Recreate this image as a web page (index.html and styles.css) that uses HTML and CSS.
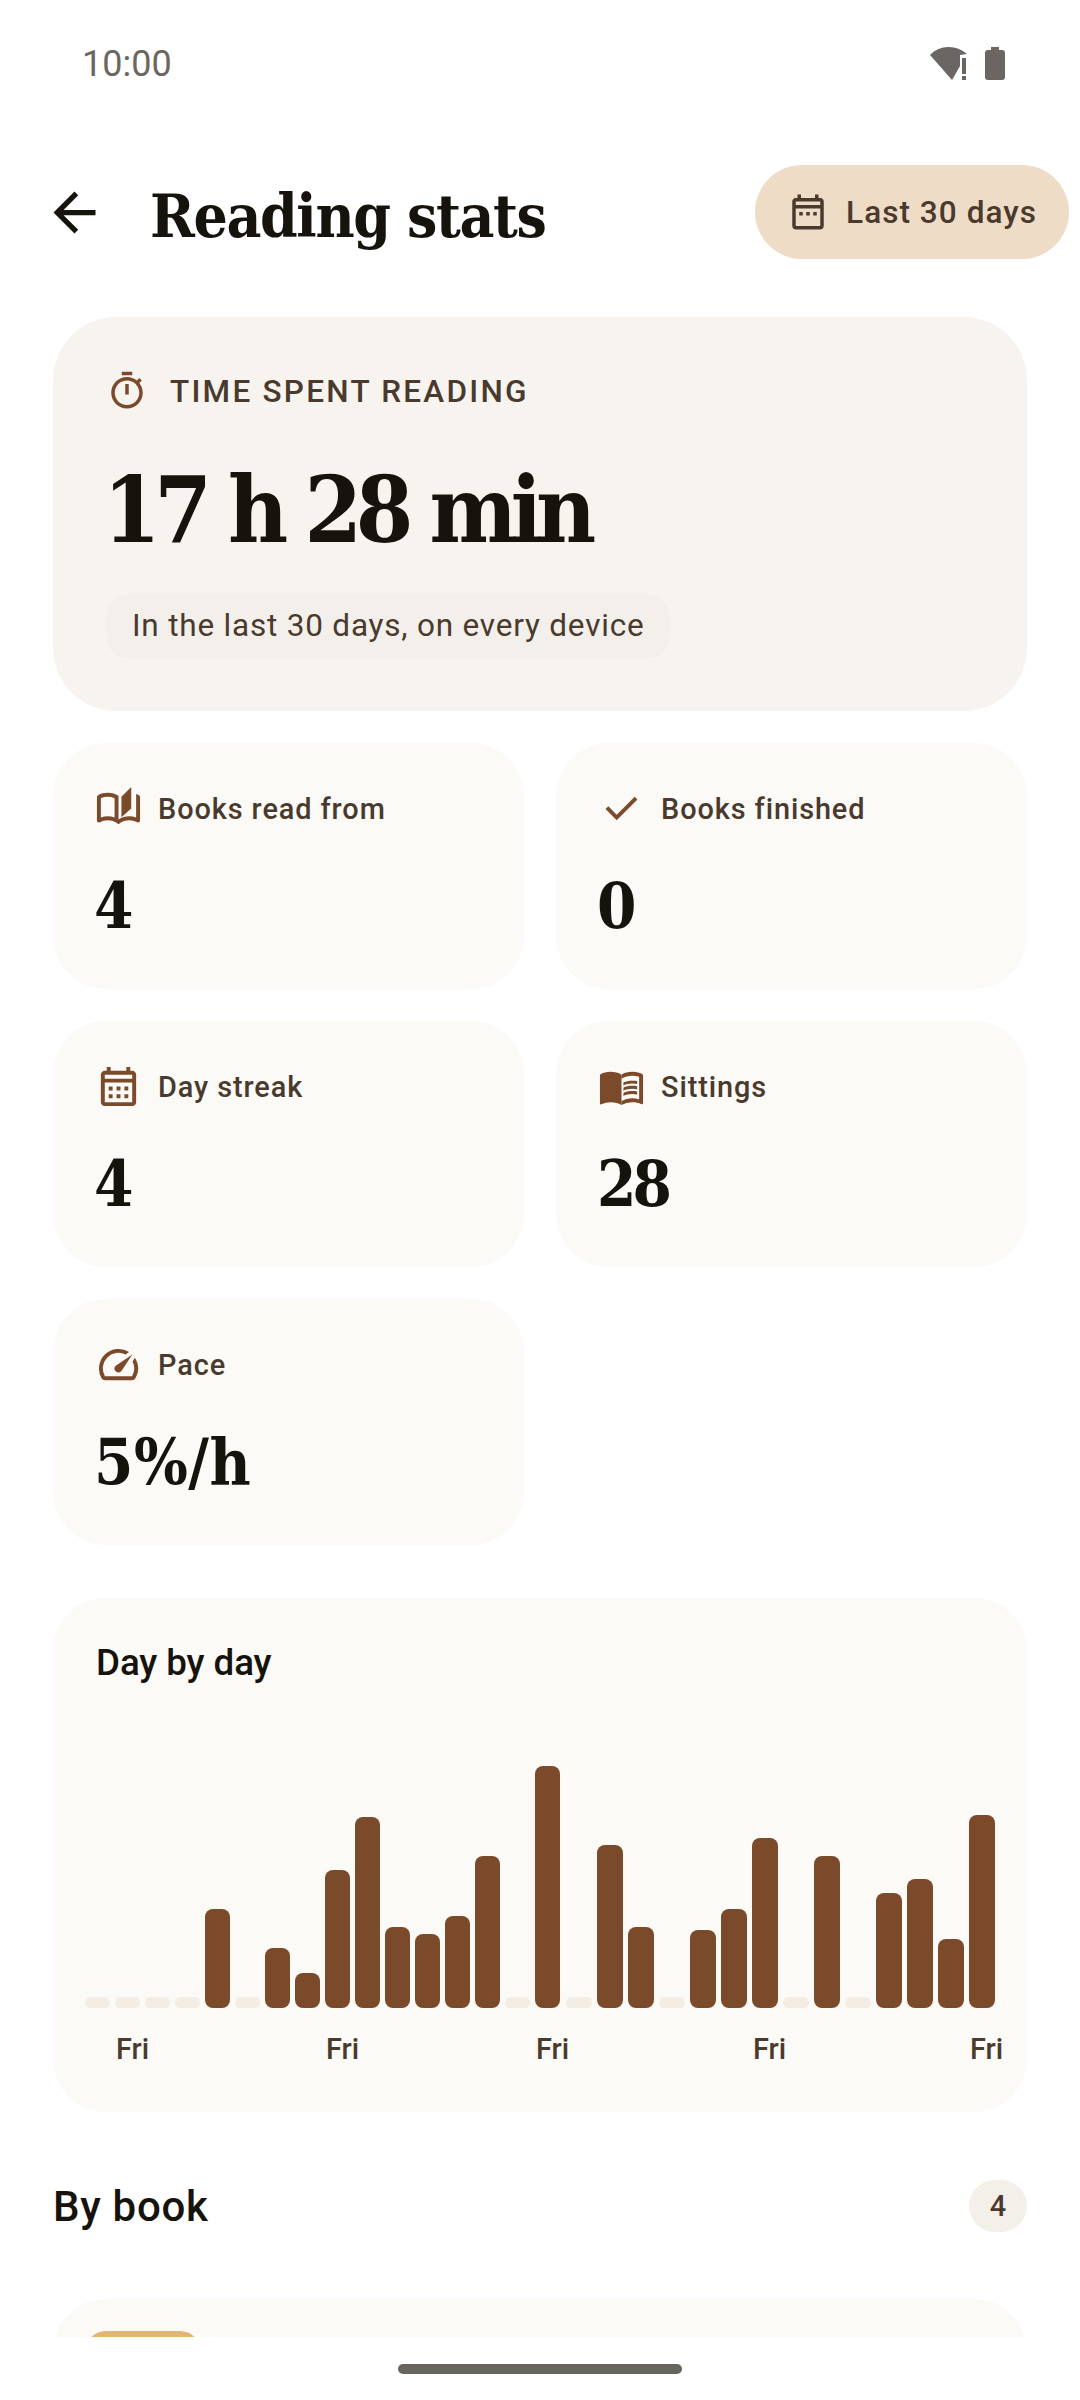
FILE: index.html
```html
<!DOCTYPE html>
<html lang="en">
<head>
    <meta charset="utf-8">
    <title>Reading stats</title>
    <link rel="stylesheet" href="styles.css">
</head>
<body>
<div class="screen">
    <div class="status">
        <span class="clock">10:00</span>
        <div class="status-icons">
            <svg class="wifi" viewBox="0 0 38 33"><path d="M0 8C10-2.500 26-2.500 37 7l-7 1v11l-8 14z"/><path d="M32 11h4v16h-4zM32 29h4v4h-4z"/></svg>
            <svg class="battery" viewBox="0 0 20 33"><path d="M6 0h8v3h3a3 3 0 0 1 3 3v24a3 3 0 0 1-3 3H3a3 3 0 0 1-3-3V6a3 3 0 0 1 3-3h3z"/></svg>
        </div>
    </div>

    <div class="content">
        <div class="topbar">
            <svg class="back" viewBox="0 0 24 24"><path d="M7.825 13l5.600 5.600L12 20l-8-8 8-8 1.425 1.400-5.600 5.600H20v2H7.825z"/></svg>
            <h1 class="title">Reading stats</h1>
            <div class="range">
                <svg class="range-icon" viewBox="0 0 24 24"><path d="M5 22c-.55 0-1.020-.2-1.410-.59C3.200 21.020 3 20.550 3 20V6c0-.55.2-1.020.59-1.410C3.980 4.200 4.450 4 5 4h1V2h2v2h8V2h2v2h1c.55 0 1.020.2 1.410.59.39.39.59.86.59 1.410v14c0 .55-.2 1.020-.59 1.410-.39.39-.86.59-1.410.59H5zm0-2h14V10H5v10zM5 8h14V6H5v2z"/><path d="M7 12h2v2H7zM11 12h2v2h-2zM15 12h2v2h-2z"/></svg>
                <span>Last 30 days</span>
            </div>
        </div>

        <div class="hero">
            <div class="hero-label">
                <svg class="hero-icon" viewBox="0 0 24 24"><path d="M9 1h6v2H9zM11 8h2v6h-2zM19.030 7.390l1.420-1.420c-.43-.51-.9-.99-1.410-1.410l-1.420 1.420C16.070 4.740 14.120 4 12 4c-4.970 0-9 4.030-9 9s4.020 9 9 9 9-4.030 9-9c0-2.120-.74-4.070-1.970-5.610zM12 20c-3.870 0-7-3.130-7-7s3.130-7 7-7 7 3.130 7 7-3.130 7-7 7z"/></svg>
                <span>TIME SPENT READING</span>
            </div>
            <div class="hero-value">17 h 28 min</div>
            <div class="hero-note">In the last 30 days, on every device</div>
        </div>

        <div class="stats">
            <div class="stat">
                <div class="stat-label">
                    <svg class="stat-icon" viewBox="0 0 24 24"><path d="M18.500 1l-5 5v10.500l5-4.500V1z"/><path d="M22.470 5.200C22 4.960 21.510 4.760 21 4.590v12.030C19.860 16.210 18.690 16 17.500 16c-1.900 0-3.780.54-5.500 1.580V5.480C10.380 4.550 8.510 4 6.500 4 4.710 4 3.020 4.440 1.530 5.200 1.200 5.360 1 5.710 1 6.080v12.080c0 .76.81 1.230 1.480.87C3.690 18.400 5.050 18 6.500 18c2.070 0 3.980.82 5.500 2 1.520-1.180 3.430-2 5.500-2 1.450 0 2.810.4 4.020 1.040.67.36 1.480-.11 1.480-.87V6.080c0-.37-.2-.72-.53-.88zM10 16.620C8.860 16.210 7.690 16 6.500 16c-1.190 0-2.360.21-3.500.62V6.710C4.110 6.240 5.280 6 6.500 6c1.200 0 2.390.25 3.500.72v9.900z"/></svg>
                    <span>Books read from</span>
                </div>
                <div class="stat-value">4</div>
            </div>
            <div class="stat">
                <div class="stat-label">
                    <svg class="stat-icon" viewBox="0 0 24 24"><path d="M9.550 18l-5.700-5.700 1.425-1.425L9.550 15.150l9.175-9.175L20.150 7.400z"/></svg>
                    <span>Books finished</span>
                </div>
                <div class="stat-value">0</div>
            </div>
            <div class="stat">
                <div class="stat-label">
                    <svg class="stat-icon" viewBox="0 0 24 24"><path d="M5 22c-.55 0-1.020-.2-1.410-.59C3.200 21.020 3 20.550 3 20V6c0-.55.2-1.020.59-1.410C3.980 4.200 4.450 4 5 4h1V2h2v2h8V2h2v2h1c.55 0 1.020.2 1.410.59.39.39.59.86.59 1.410v14c0 .55-.2 1.020-.59 1.410-.39.39-.86.59-1.410.59H5zm0-2h14V10H5v10zM5 8h14V6H5v2z"/><path d="M7 12h2v2H7zM11 12h2v2h-2zM15 12h2v2h-2zM7 16h2v2H7zM11 16h2v2h-2zM15 16h2v2h-2z"/></svg>
                    <span>Day streak</span>
                </div>
                <div class="stat-value">4</div>
            </div>
            <div class="stat">
                <div class="stat-label">
                    <svg class="stat-icon" viewBox="0 0 24 24"><path d="M12 6c-1.450-1.100-3.550-1.500-5.500-1.500S2.450 4.900 1 6v14.650c0 .25.25.5.5.5.1 0 .15-.05.25-.05C3.100 20.450 5.050 20 6.500 20c1.950 0 4.050.4 5.500 1.500z"/><path d="M21 5c-1.110-.35-2.330-.5-3.500-.5-1.950 0-4.050.4-5.500 1.500v15.500c1.350-.85 3.800-1.500 5.500-1.500 1.650 0 3.350.3 4.750 1.050.1.05.15.05.25.05.25 0 .5-.25.5-.5V6c-.6-.45-1.250-.75-2-1zm0 13.500c-1.100-.35-2.300-.5-3.500-.5-1.700 0-4.150.65-5.500 1.500V8c1.350-.85 3.800-1.500 5.500-1.500 1.200 0 2.400.15 3.500.5v11.500z"/><path d="M17.500 10.500c.88 0 1.730.09 2.500.26V9.240c-.79-.15-1.640-.24-2.500-.24-1.700 0-3.240.29-4.500.83v1.660c1.130-.64 2.700-.99 4.500-.99zM13 12.490v1.660c1.130-.64 2.700-.99 4.500-.99.88 0 1.730.09 2.500.26V11.900c-.79-.15-1.640-.24-2.500-.24-1.700 0-3.240.3-4.500.83zM17.500 14.330c-1.700 0-3.240.29-4.500.83v1.660c1.130-.64 2.700-.99 4.500-.99.88 0 1.730.09 2.500.26v-1.520c-.79-.16-1.640-.24-2.500-.24z"/></svg>
                    <span>Sittings</span>
                </div>
                <div class="stat-value tight">28</div>
            </div>
            <div class="stat">
                <div class="stat-label">
                    <svg class="stat-icon" viewBox="0 0 24 24"><path d="M20.380 8.570l-1.230 1.850a8 8 0 0 1-.22 7.580H5.070A8 8 0 0 1 15.580 6.850l1.850-1.230A10 10 0 0 0 3.350 19a2 2 0 0 0 1.720 1h13.850a2 2 0 0 0 1.740-1 10 10 0 0 0-.27-10.430z"/><path d="M10.590 15.410a2 2 0 0 0 2.830 0l5.660-8.490-8.490 5.660a2 2 0 0 0 0 2.830z"/></svg>
                    <span>Pace</span>
                </div>
                <div class="stat-value">5%/h</div>
            </div>
        </div>

        <div class="chart-card">
            <div class="chart-title">Day by day</div>
            <div class="bars">
                <div class="bar empty"></div>
                <div class="bar empty"></div>
                <div class="bar empty"></div>
                <div class="bar empty"></div>
                <div class="bar" style="height:99px"></div>
                <div class="bar empty"></div>
                <div class="bar" style="height:60px"></div>
                <div class="bar" style="height:35px"></div>
                <div class="bar" style="height:138px"></div>
                <div class="bar" style="height:191px"></div>
                <div class="bar" style="height:81px"></div>
                <div class="bar" style="height:74px"></div>
                <div class="bar" style="height:92px"></div>
                <div class="bar" style="height:152px"></div>
                <div class="bar empty"></div>
                <div class="bar" style="height:242px"></div>
                <div class="bar wide empty"></div>
                <div class="bar wide" style="height:163px"></div>
                <div class="bar wide" style="height:81px"></div>
                <div class="bar wide empty"></div>
                <div class="bar wide" style="height:78px"></div>
                <div class="bar wide" style="height:99px"></div>
                <div class="bar wide" style="height:170px"></div>
                <div class="bar wide empty"></div>
                <div class="bar wide" style="height:152px"></div>
                <div class="bar wide empty"></div>
                <div class="bar wide" style="height:115px"></div>
                <div class="bar wide" style="height:129px"></div>
                <div class="bar wide" style="height:69px"></div>
                <div class="bar wide" style="height:193px"></div>
            </div>
            <div class="days">
                <span>Fri</span>
                <span>Fri</span>
                <span>Fri</span>
                <span>Fri</span>
                <span>Fri</span>
            </div>
        </div>

        <div class="section-head">
            <h2 class="section-title">By book</h2>
            <span class="count">4</span>
        </div>

        <div class="book">
            <div class="cover"></div>
        </div>
    </div>

    <div class="navbar"><div class="handle"></div></div>
</div>
</body>
</html>
```

FILE: styles.css
```css
html, body {
    margin: 0;
    padding: 0;
    background: #fff;
}

body {
    font-family: Roboto, sans-serif;
    color: #16130c;
}

svg {
    display: block;
    flex: none;
    fill: currentColor;
}

.screen {
    width: 1080px;
    height: 2400px;
    display: flex;
    flex-direction: column;
    overflow: hidden;
}

.status {
    height: 126px;
    flex: none;
    display: flex;
    justify-content: space-between;
    align-items: flex-start;
    padding: 42px 75px 0 82px;
    box-sizing: border-box;
    color: #6b6661;
}

.clock {
    font-size: 36px;
    line-height: 44px;
}

.status-icons {
    display: flex;
    gap: 17px;
    padding-top: 5px;
}

.wifi {
    width: 38px;
    height: 33px;
}

.battery {
    width: 20px;
    height: 33px;
}

.content {
    flex: 1;
    overflow: hidden;
}

.topbar {
    display: flex;
    align-items: center;
    padding: 39px 11px 58px 43px;
}

.back {
    width: 63px;
    height: 63px;
}

.title {
    margin: 8px 0 0 44px;
    flex: 1;
    font-family: "DejaVu Serif Condensed", "DejaVu Serif", serif;
    font-weight: 700;
    font-size: 60px;
    letter-spacing: -1.400px;
}

.range {
    display: flex;
    align-items: center;
    gap: 17px;
    height: 94px;
    padding: 0 32px;
    border-radius: 47px;
    background: #eedcc6;
    color: #4a3a2e;
    font-size: 31.500px;
    font-weight: 480;
    letter-spacing: 1.050px;
}

.range-icon {
    width: 42px;
    height: 42px;
}

.hero {
    margin: 0 53px;
    height: 394px;
    box-sizing: border-box;
    padding: 53px 53px 0;
    border-radius: 63px;
    background: #f7f4ef;
}

.hero-label {
    display: flex;
    align-items: center;
    gap: 22px;
    color: #4a3a2e;
    font-size: 31.500px;
    font-weight: 500;
    letter-spacing: 2.250px;
}

.hero-icon {
    width: 42px;
    height: 42px;
    color: #7b4a2b;
}

.hero-value {
    margin: 38px 0 0 -3px;
    font-family: "DejaVu Serif Condensed", "DejaVu Serif", serif;
    font-weight: 700;
    font-size: 92px;
    letter-spacing: -6.300px;
    line-height: 120px;
}

.hero-note {
    display: inline-block;
    margin-top: 24px;
    padding: 0 26px;
    height: 64px;
    line-height: 64px;
    border-radius: 21px;
    background: #f3f0eb;
    color: #4a3a2e;
    font-size: 31.500px;
    letter-spacing: 0.800px;
}

.stats {
    display: grid;
    grid-template-columns: 1fr 1fr;
    gap: 32px;
    margin: 32px 53px 0;
}

.stat {
    height: 246px;
    box-sizing: border-box;
    padding: 42px 42px 0;
    border-radius: 53px;
    background: #fbfaf6;
}

.stat-label {
    display: flex;
    align-items: center;
    gap: 16px;
    color: #4a3a2e;
    font-size: 28.900px;
    font-weight: 480;
    letter-spacing: 0.900px;
}

.stat-icon {
    width: 47px;
    height: 47px;
    color: #7b4a2b;
}

.stat-value {
    margin: 34px 0 0 -1px;
    font-family: "DejaVu Serif Condensed", "DejaVu Serif", serif;
    font-weight: 700;
    font-size: 63px;
    line-height: 80px;
    letter-spacing: 0.500px;
}

.stat-value.tight {
    letter-spacing: -4px;
}

.chart-card {
    margin: 53px 53px 0;
    height: 514px;
    box-sizing: border-box;
    padding: 43px 32px 0;
    border-radius: 53px;
    background: #fbfaf6;
}

.chart-title {
    padding-left: 11px;
    font-size: 36.750px;
    font-weight: 500;
    line-height: 44px;
    letter-spacing: -0.100px;
}

.bars {
    display: flex;
    align-items: flex-end;
    gap: 5px;
    height: 268px;
    margin-top: 55px;
}

.bar {
    width: 25px;
    flex: none;
    border-radius: 8px;
    background: #7b4a2b;
}

.bar.wide {
    width: 26px;
}

.bar.empty {
    height: 11px;
    border-radius: 6px;
    background: #f3ede4;
}

.bar:nth-child(17) {
    margin-left: 1px;
}

.days {
    display: grid;
    grid-template-columns: 210px 210px 217px 217px auto;
    margin-top: 23px;
    padding-left: 31px;
    color: #4a3a2e;
    font-size: 28.900px;
    font-weight: 480;
    line-height: 36px;
}

.section-head {
    display: flex;
    justify-content: space-between;
    align-items: center;
    height: 52px;
    margin: 68px 53px 0;
}

.section-title {
    margin: 0;
    font-size: 42px;
    font-weight: 500;
    letter-spacing: 0.700px;
}

.count {
    width: 58px;
    height: 52px;
    line-height: 52px;
    text-align: center;
    border-radius: 26px;
    background: #f3f0ea;
    color: #4a3a2e;
    font-size: 28.900px;
    font-weight: 500;
}

.book {
    height: 200px;
    margin: 67px 53px 0;
    padding: 32px;
    box-sizing: border-box;
    border-radius: 53px;
    background: #fbfaf6;
}

.cover {
    width: 116px;
    height: 150px;
    border-radius: 21px;
    background: #e3b574;
}

.navbar {
    height: 63px;
    flex: none;
    display: flex;
    justify-content: center;
    padding-top: 27px;
    box-sizing: border-box;
    background: #fff;
}

.handle {
    width: 284px;
    height: 10px;
    border-radius: 5px;
    background: #686460;
}
```
